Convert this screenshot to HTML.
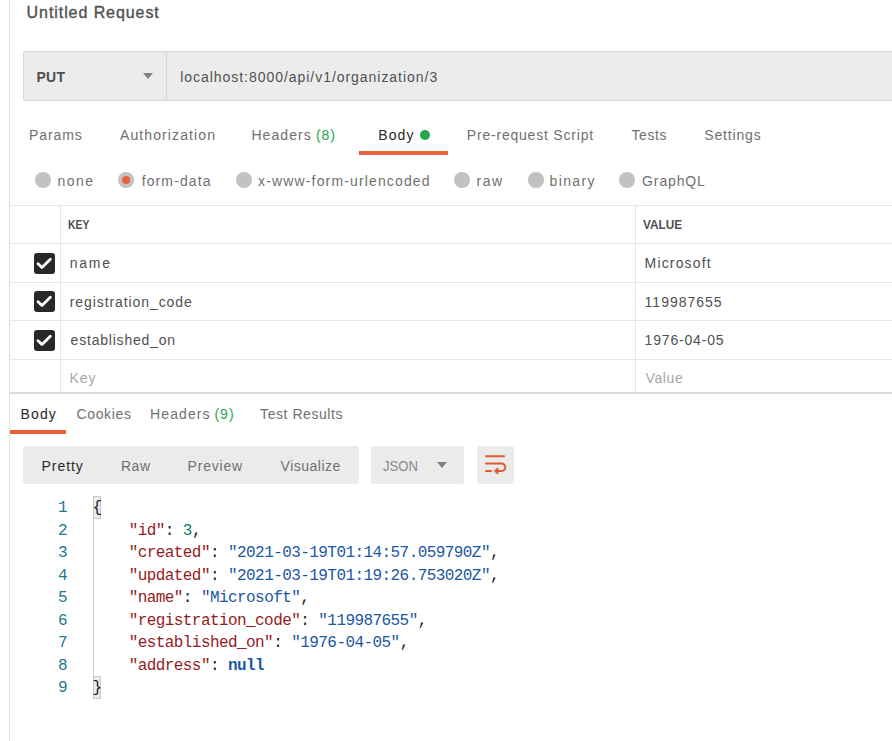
<!DOCTYPE html>
<html><head><meta charset="utf-8">
<style>
html,body{margin:0;padding:0;background:#fff;}
body{width:892px;height:741px;position:relative;overflow:hidden;font-family:"Liberation Sans",sans-serif;}
.a{position:absolute;}
.t{position:absolute;white-space:nowrap;line-height:1;font-size:14px;color:#707070;}
.hl{position:absolute;background:#e6e6e6;}
.rad{position:absolute;width:15.5px;height:15.5px;border-radius:50%;background:#c2c2c2;}
.cb{position:absolute;width:20.5px;height:20.5px;border-radius:3px;background:#282828;}
.cb svg{position:absolute;left:0;top:0;}
.box{position:absolute;background:#ebebeb;border-radius:3px;}
.code{position:absolute;font-family:"Liberation Mono",monospace;font-size:16px;letter-spacing:-0.57px;line-height:22.5px;white-space:pre;}
.k{color:#951b22;}
.s{color:#1c57a3;}
.n{color:#098658;}
.p{color:#222;}
.ln{color:#237893;}
</style></head><body>
<!-- left vertical border -->
<div class="a" style="left:9px;top:0;width:1px;height:741px;background:#e2e2e2"></div>

<!-- title -->

<!-- url bar -->
<div class="a" style="left:23px;top:51px;width:880px;height:48px;border:1px solid #d6d6d6;border-radius:3px;background:#ececec"></div>
<div class="a" style="left:166px;top:52px;width:1px;height:48px;background:#d6d6d6"></div>
<div class="a" style="left:143px;top:73px;width:0;height:0;border-left:5px solid transparent;border-right:5px solid transparent;border-top:6px solid #808080"></div>

<!-- request tabs -->
<div class="a" style="left:420px;top:130px;width:10px;height:10px;border-radius:50%;background:#26a550"></div>
<div class="a" style="left:359px;top:151px;width:89px;height:4px;background:#e5623b"></div>

<!-- radio row -->
<div class="rad" style="left:35px;top:172px"></div>
<div class="rad" style="left:118px;top:172px"></div>
<div class="a" style="left:121.8px;top:175.8px;width:8.2px;height:8.2px;border-radius:50%;background:#e5623b"></div>
<div class="rad" style="left:236px;top:172px"></div>
<div class="rad" style="left:454px;top:172px"></div>
<div class="rad" style="left:528px;top:172px"></div>
<div class="rad" style="left:619px;top:172px"></div>

<!-- table -->
<div class="hl" style="left:9px;top:205px;width:883px;height:1px"></div>
<div class="hl" style="left:9px;top:243px;width:883px;height:1px"></div>
<div class="hl" style="left:9px;top:282px;width:883px;height:1px"></div>
<div class="hl" style="left:9px;top:320px;width:883px;height:1px"></div>
<div class="hl" style="left:9px;top:359px;width:883px;height:1px"></div>
<div class="hl" style="left:9px;top:392px;width:883px;height:2px;background:#dcdcdc"></div>
<div class="hl" style="left:60px;top:205px;width:1px;height:187px"></div>
<div class="hl" style="left:635px;top:205px;width:1px;height:187px"></div>


<div class="cb" style="left:34px;top:253px"><svg width="21" height="20"><path d="M4 10.8 L8 14.6 L16.3 6.3" stroke="#fff" stroke-width="2.8" fill="none" stroke-linecap="round" stroke-linejoin="round"/></svg></div>
<div class="cb" style="left:34px;top:291px"><svg width="21" height="20"><path d="M4 10.8 L8 14.6 L16.3 6.3" stroke="#fff" stroke-width="2.8" fill="none" stroke-linecap="round" stroke-linejoin="round"/></svg></div>
<div class="cb" style="left:34px;top:330px"><svg width="21" height="20"><path d="M4 10.8 L8 14.6 L16.3 6.3" stroke="#fff" stroke-width="2.8" fill="none" stroke-linecap="round" stroke-linejoin="round"/></svg></div>


<!-- response tabs -->
<div class="a" style="left:10px;top:430px;width:56px;height:4px;background:#e5623b"></div>

<!-- toolbar -->
<div class="box" style="left:23px;top:446px;width:336px;height:38px"></div>
<div class="box" style="left:371px;top:446px;width:93px;height:38px"></div>
<div class="a" style="left:437px;top:462px;width:0;height:0;border-left:5px solid transparent;border-right:5px solid transparent;border-top:6px solid #808080"></div>
<div class="box" style="left:477px;top:446px;width:37px;height:38px"></div>
<svg class="a" style="left:477px;top:446px" width="37" height="38" viewBox="0 0 37 38">
<g stroke="#e05a34" stroke-width="2" fill="none" stroke-linecap="round" stroke-linejoin="round">
<path d="M9 10.2 H27"/>
<path d="M9 17.6 H24.6 A3.7 3.7 0 0 1 24.6 25 H18.6"/>
<path d="M9 25 H14"/>
<path d="M20.6 22.7 L18.3 25 L20.6 27.3"/>
</g></svg>

<!-- code -->
<div class="code ln" style="left:58px;top:497px">1
2
3
4
5
6
7
8
9</div>
<div class="a" style="left:93px;top:519px;width:1px;height:157px;background:#d0d0d0"></div>
<div class="a" style="left:93px;top:496px;width:6px;height:20.5px;border:1px solid #c8c8c8;background:#ececec"></div>
<div class="a" style="left:93px;top:676px;width:6px;height:20.5px;border:1px solid #c8c8c8;background:#ececec"></div>
<div class="code p" style="left:92.5px;top:497px">{
    <span class="k">"id"</span>: <span class="n">3</span>,
    <span class="k">"created"</span>: <span class="s">"2021-03-19T01:14:57.059790Z"</span>,
    <span class="k">"updated"</span>: <span class="s">"2021-03-19T01:19:26.753020Z"</span>,
    <span class="k">"name"</span>: <span class="s">"Microsoft"</span>,
    <span class="k">"registration_code"</span>: <span class="s">"119987655"</span>,
    <span class="k">"established_on"</span>: <span class="s">"1976-04-05"</span>,
    <span class="k">"address"</span>: <b class="s">null</b>
}</div>
<div class="t" style="left:26.6px;top:4.7px;font-size:16px;font-weight:normal;color:#505050;letter-spacing:0.927px;-webkit-text-stroke:0.35px #505050">Untitled Request</div>
<div class="t" style="left:36.4px;top:70.0px;font-size:14px;font-weight:bold;color:#505050;letter-spacing:0.350px">PUT</div>
<div class="t" style="left:180.2px;top:70.0px;font-size:14px;font-weight:normal;color:#505050;letter-spacing:0.960px">localhost:8000/api/v1/organization/3</div>
<div class="t" style="left:29.0px;top:128.2px;font-size:14px;font-weight:normal;color:#707070;letter-spacing:0.920px">Params</div>
<div class="t" style="left:120.0px;top:128.2px;font-size:14px;font-weight:normal;color:#707070;letter-spacing:1.100px">Authorization</div>
<div class="t" style="left:251.4px;top:128.2px;font-size:14px;font-weight:normal;color:#707070;letter-spacing:1.083px">Headers</div>
<div class="t" style="left:316.1px;top:128.2px;font-size:14px;font-weight:normal;color:#26a550;letter-spacing:0.850px">(8)</div>
<div class="t" style="left:378.2px;top:128.2px;font-size:14px;font-weight:normal;color:#282828;letter-spacing:1.133px">Body</div>
<div class="t" style="left:466.8px;top:128.2px;font-size:14px;font-weight:normal;color:#707070;letter-spacing:0.794px">Pre-request Script</div>
<div class="t" style="left:631.4px;top:128.2px;font-size:14px;font-weight:normal;color:#707070;letter-spacing:0.625px">Tests</div>
<div class="t" style="left:704.3px;top:128.2px;font-size:14px;font-weight:normal;color:#707070;letter-spacing:0.829px">Settings</div>
<div class="t" style="left:57.5px;top:174.0px;font-size:14px;font-weight:normal;color:#707070;letter-spacing:1.500px">none</div>
<div class="t" style="left:141.7px;top:174.0px;font-size:14px;font-weight:normal;color:#707070;letter-spacing:1.113px">form-data</div>
<div class="t" style="left:258.1px;top:174.0px;font-size:14px;font-weight:normal;color:#707070;letter-spacing:1.145px">x-www-form-urlencoded</div>
<div class="t" style="left:476.6px;top:174.0px;font-size:14px;font-weight:normal;color:#707070;letter-spacing:1.500px">raw</div>
<div class="t" style="left:549.5px;top:174.0px;font-size:14px;font-weight:normal;color:#707070;letter-spacing:1.380px">binary</div>
<div class="t" style="left:642.1px;top:174.0px;font-size:14px;font-weight:normal;color:#707070;letter-spacing:0.867px">GraphQL</div>
<div class="t" style="left:68.0px;top:218.7px;font-size:12px;font-weight:bold;color:#505050;transform:scaleX(0.8680);transform-origin:0 0">KEY</div>
<div class="t" style="left:642.6px;top:218.7px;font-size:12px;font-weight:bold;color:#505050;transform:scaleX(0.9800);transform-origin:0 0">VALUE</div>
<div class="t" style="left:69.8px;top:256.0px;font-size:14px;font-weight:normal;color:#505050;letter-spacing:1.700px">name</div>
<div class="t" style="left:69.8px;top:295.0px;font-size:14px;font-weight:normal;color:#505050;letter-spacing:0.913px">registration_code</div>
<div class="t" style="left:70.6px;top:333.0px;font-size:14px;font-weight:normal;color:#505050;letter-spacing:0.792px">established_on</div>
<div class="t" style="left:69.6px;top:371.0px;font-size:14px;font-weight:normal;color:#a8a8a8;letter-spacing:0.900px">Key</div>
<div class="t" style="left:644.6px;top:256.0px;font-size:14px;font-weight:normal;color:#505050;letter-spacing:1.150px">Microsoft</div>
<div class="t" style="left:644.6px;top:295.0px;font-size:14px;font-weight:normal;color:#505050;letter-spacing:1.000px">119987655</div>
<div class="t" style="left:644.6px;top:333.0px;font-size:14px;font-weight:normal;color:#505050;letter-spacing:0.822px">1976-04-05</div>
<div class="t" style="left:645.6px;top:371.0px;font-size:14px;font-weight:normal;color:#a8a8a8;letter-spacing:0.575px">Value</div>
<div class="t" style="left:20.5px;top:406.7px;font-size:14px;font-weight:normal;color:#282828;letter-spacing:1.133px">Body</div>
<div class="t" style="left:76.5px;top:406.7px;font-size:14px;font-weight:normal;color:#707070;letter-spacing:0.633px">Cookies</div>
<div class="t" style="left:150.1px;top:406.7px;font-size:14px;font-weight:normal;color:#707070;letter-spacing:1.083px">Headers</div>
<div class="t" style="left:214.4px;top:406.7px;font-size:14px;font-weight:normal;color:#26a550;letter-spacing:1.050px">(9)</div>
<div class="t" style="left:260.1px;top:406.7px;font-size:14px;font-weight:normal;color:#707070;letter-spacing:0.555px">Test Results</div>
<div class="t" style="left:41.6px;top:459.0px;font-size:14px;font-weight:normal;color:#282828;letter-spacing:0.940px">Pretty</div>
<div class="t" style="left:120.9px;top:459.0px;font-size:14px;font-weight:normal;color:#707070;letter-spacing:0.600px">Raw</div>
<div class="t" style="left:187.6px;top:459.0px;font-size:14px;font-weight:normal;color:#707070;letter-spacing:0.800px">Preview</div>
<div class="t" style="left:280.6px;top:459.0px;font-size:14px;font-weight:normal;color:#707070;letter-spacing:0.500px">Visualize</div>
<div class="t" style="left:383.4px;top:459.0px;font-size:14px;font-weight:normal;color:#8a8a8a;transform:scaleX(0.9351);transform-origin:0 0">JSON</div>
</body></html>
